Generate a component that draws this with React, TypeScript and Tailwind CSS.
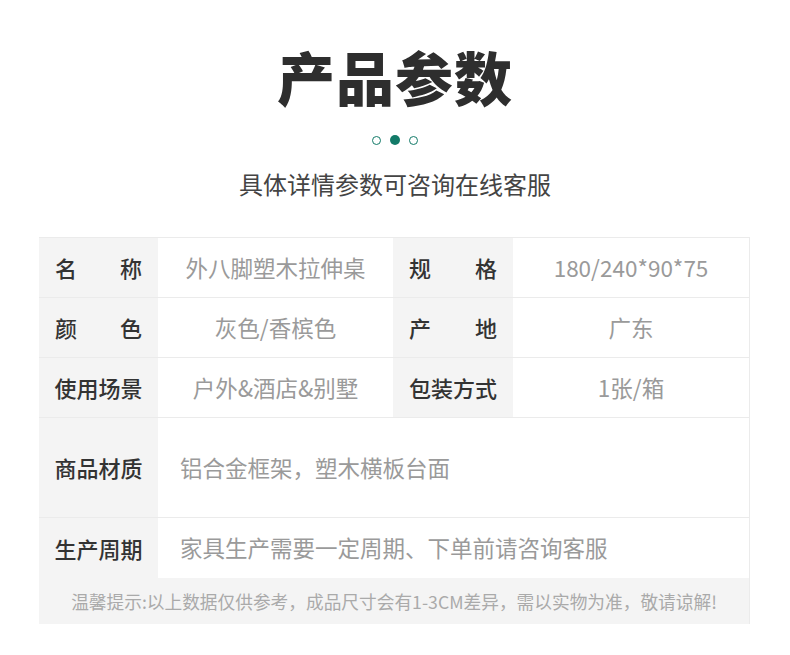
import React from 'react';

const font = { fontFamily: '"Noto Sans CJK SC", "Noto Sans", sans-serif' };

function Label({ text, spread, width }: { text: string; spread?: boolean; width: string }) {
  return (
    <div className={`${width} shrink-0 bg-[#f4f4f4] flex items-center px-[14px]`}>
      <div
        className={`w-full flex text-[22px] font-medium text-[#333] ${
          spread ? 'justify-between px-[2px]' : 'justify-center'
        }`}
      >
        {spread ? text.split('').map((c, i) => <span key={i}>{c}</span>) : text}
      </div>
    </div>
  );
}

function Value({ text, width }: { text: string; width: string }) {
  return (
    <div className={`${width} flex items-center justify-center text-[22.5px] text-[#9a9a9a]`}>
      {text}
    </div>
  );
}

const pairRows = [
  { a: '名称', av: '外八脚塑木拉伸桌', b: '规格', bv: '180/240*90*75', spread: true },
  { a: '颜色', av: '灰色/香槟色', b: '产地', bv: '广东', spread: true },
  { a: '使用场景', av: '户外&酒店&别墅', b: '包装方式', bv: '1张/箱', spread: false },
];

export default function App() {
  return (
    <div className="w-[790px] h-[655px] bg-white overflow-hidden" style={font}>
      <div className="pt-[38px] flex flex-col items-center">
        <h1 className="text-[58px] leading-[76px] font-black text-[#2e2e2e] tracking-[1px]">
          产品参数
        </h1>
        <div className="mt-[21px] flex items-center gap-[9px]">
          <span className="w-[9px] h-[9px] rounded-full border-[1.5px] border-[#127a68]" />
          <span className="w-[10px] h-[10px] rounded-full bg-[#127a68]" />
          <span className="w-[9px] h-[9px] rounded-full border-[1.5px] border-[#127a68]" />
        </div>
        <p className="mt-[23px] text-[24px] leading-[32px] text-[#444]">具体详情参数可咨询在线客服</p>
      </div>

      <div className="ml-[39px] mt-[37px] w-[711px] border-t border-r border-[#ebebeb]">
        {pairRows.map((r) => (
          <div key={r.a} className="flex h-[60px] border-b border-[#ebebeb]">
            <Label text={r.a} spread={r.spread} width="w-[119px]" />
            <Value text={r.av} width="w-[235px]" />
            <Label text={r.b} spread={r.spread} width="w-[120px]" />
            <Value text={r.bv} width="flex-1" />
          </div>
        ))}

        <div className="flex h-[100px] border-b border-[#ebebeb]">
          <Label text="商品材质" width="w-[119px]" />
          <div className="flex-1 flex items-center pl-[22px] text-[22.5px] text-[#9a9a9a]">
            铝合金框架，塑木横板台面
          </div>
        </div>

        <div className="flex h-[60px]">
          <Label text="生产周期" width="w-[119px]" />
          <div className="flex-1 flex items-center pl-[22px] text-[22.5px] text-[#9a9a9a]">
            家具生产需要一定周期、下单前请咨询客服
          </div>
        </div>

        <div className="h-[46px] bg-[#f4f4f4] flex items-center justify-center text-[17.7px] text-[#aaa]">
          温馨提示:以上数据仅供参考，成品尺寸会有1-3CM差异，需以实物为准，敬请谅解!
        </div>
      </div>
    </div>
  );
}
